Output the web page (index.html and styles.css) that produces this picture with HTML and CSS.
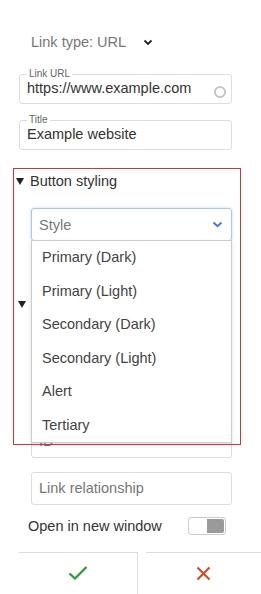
FILE: index.html
```html
<!DOCTYPE html>
<html lang="en">
<head>
    <meta charset="UTF-8">
    <meta name="viewport" content="width=device-width, initial-scale=1.0">
    <title>Link settings</title>
    <link rel="stylesheet" href="styles.css">
</head>
<body>

    <div class="panel">
        <div class="link-type">
            Link type: URL
            <svg class="chev" width="10" height="7" viewBox="0 0 10 7"><path d="M1.5 1.5 L5 5 L8.5 1.5" fill="none" stroke="#222" stroke-width="1.8"/></svg>
        </div>

        <fieldset class="field url">
            <legend>Link URL</legend>
            <div class="value">https://www.example.com</div>
            <span class="ring"></span>
        </fieldset>

        <fieldset class="field">
            <legend>Title</legend>
            <div class="value">Example website</div>
        </fieldset>

        <div class="section styling">
            <div class="summary"><span class="tri"></span>Button styling</div>
            <div class="select open">
                <span class="placeholder">Style</span>
                <svg width="11" height="7" viewBox="0 0 11 7"><path d="M1.5 1.5 L5.5 5.2 L9.5 1.5" fill="none" stroke="#3a7bd5" stroke-width="1.8"/></svg>
                <ul class="options">
                    <li>Primary (Dark)</li>
                    <li>Primary (Light)</li>
                    <li>Secondary (Dark)</li>
                    <li>Secondary (Light)</li>
                    <li>Alert</li>
                    <li>Tertiary</li>
                </ul>
            </div>
            <!-- size select, covered by the open list -->
            <div class="select"></div>
        </div>

        <div class="section advanced">
            <div class="summary"><span class="tri"></span></div>
            <div class="input first"></div>
            <div class="input"></div>
            <div class="input">ID</div>
            <div class="input">Link relationship</div>
        </div>

        <div class="toggle-row">
            <span>Open in new window</span>
            <span class="toggle"><span class="knob"></span><span class="track"></span></span>
        </div>

        <div class="actions">
            <button class="act ok">
                <svg width="20" height="16" viewBox="0 0 20 16"><path d="M1.5 8.5 L7 13.5 L18.5 2" fill="none" stroke="#2b9a2b" stroke-width="2.2"/></svg>
            </button>
            <button class="act cancel">
                <svg width="15" height="15" viewBox="0 0 15 15"><path d="M1.5 1.5 L13.5 13.5 M13.5 1.5 L1.5 13.5" fill="none" stroke="#d8461e" stroke-width="2"/></svg>
            </button>
        </div>
    </div>

    <div class="highlight"></div>

</body>
</html>
```

FILE: styles.css
```css
body {
    margin: 0;
    font-family: "Liberation Sans", Arial, sans-serif;
    background: #fff;
    color: #333;
    position: relative;
}
.panel {
    padding: 0 29px 0 19px;
}
.link-type {
    display: flex;
    align-items: center;
    height: 20px;
    margin: 32px 0 0 12px;
    font-size: 14.5px;
    color: #777;
}
.chev { margin-left: 17px; }

.field {
    position: relative;
    margin: 11px 0 0;
    padding: 0 7px 6px;
    border: 1px solid #ddd;
    border-radius: 3px;
}
.field.url { margin-top: 17px; }
.field legend {
    font-size: 10px;
    line-height: 10px;
    color: #666;
    padding: 0 2px;
}
.field .value {
    font-size: 14.5px;
    line-height: 18px;
    color: #333;
}
.ring {
    position: absolute;
    right: 5px;
    top: 7px;
    width: 8px;
    height: 8px;
    border: 2px solid #c4c4c4;
    border-radius: 50%;
}

.section { margin-top: 22px; }
.section.advanced { margin-top: 7px; }
.summary {
    display: flex;
    align-items: center;
    height: 18px;
    font-size: 14.5px;
    color: #333;
}
.tri {
    width: 0;
    height: 0;
    border-left: 4px solid transparent;
    border-right: 4px solid transparent;
    border-top: 7px solid #222;
    margin: 0 6px 0 -1px;
}
.styling .summary { margin-left: -2px; }

.select {
    position: relative;
    display: flex;
    align-items: center;
    justify-content: space-between;
    box-sizing: border-box;
    height: 33px;
    margin: 14px 0 0 12px;
    padding: 0 8px 0 7px;
    border: 1px solid #ccc;
    border-radius: 3px;
    font-size: 14.5px;
    color: #777;
}
.select.open {
    margin-top: 18px;
    border-color: #a9c8ef;
    box-shadow: 0 0 3px rgba(80, 140, 220, 0.35);
}
.options {
    position: absolute;
    top: 31px;
    left: -1px;
    box-sizing: border-box;
    width: 201px;
    margin: 0;
    padding: 0;
    list-style: none;
    background: #fff;
    border: 1px solid #ccc;
    box-shadow: 0 2px 4px rgba(0, 0, 0, 0.12);
    z-index: 2;
}
.options li {
    height: 33.5px;
    line-height: 33.5px;
    padding-left: 10px;
    font-size: 14.5px;
    color: #444;
}

.input {
    box-sizing: border-box;
    height: 33px;
    margin: 14px 0 0 12px;
    padding: 0 7px;
    line-height: 31px;
    border: 1px solid #ddd;
    border-radius: 3px;
    font-size: 14.5px;
    color: #777;
}
.input.first { margin-top: 18px; }

.toggle-row {
    display: flex;
    align-items: center;
    justify-content: space-between;
    height: 18px;
    margin: 12px 6px 0 9px;
    font-size: 14.5px;
    color: #333;
}
.toggle {
    display: flex;
    box-sizing: border-box;
    width: 38px;
    height: 18px;
    padding: 1px;
    border: 1px solid #ccc;
    border-radius: 3px;
}
.knob { flex: 1; background: #fff; }
.track { flex: 1; background: #9a9a9a; border-radius: 0 2px 2px 0; }

.actions {
    display: flex;
    gap: 8px;
    margin: 17px -29px 0 0;
}
.act {
    display: flex;
    align-items: center;
    justify-content: center;
    height: 45px;
    padding: 0 0 4px;
    background: none;
    border: none;
    border-top: 1px solid #ddd;
}
.ok { width: 119px; border-right: 1px solid #ddd; }
.cancel { flex: 1; }

.highlight {
    position: absolute;
    left: 13px;
    top: 168px;
    width: 228px;
    height: 277px;
    box-sizing: border-box;
    border: 1.5px solid #d9313a;
    z-index: 3;
}
```
